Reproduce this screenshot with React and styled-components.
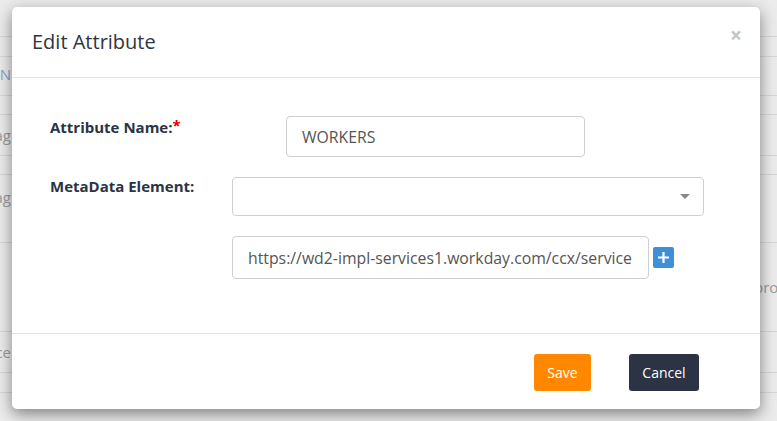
import React from 'react';
import styled, { createGlobalStyle } from 'styled-components';

const GlobalStyle = createGlobalStyle`
  html, body {
    margin: 0;
    padding: 0;
    background: #ebebeb;
  }
  body {
    font-family: "Open Sans", Lato, sans-serif;
  }
`;

const Page = styled.div`
  position: relative;
  width: 777px;
  height: 421px;
  overflow: hidden;
  background: #ebebeb;
`;

const Table = styled.div`
  display: flex;
  flex-direction: column;
`;

const Row = styled.div`
  height: ${(p) => p.h}px;
  display: flex;
  align-items: ${(p) => (p.pad != null ? 'flex-start' : 'center')};
  padding-top: ${(p) => p.pad || 0}px;
  justify-content: space-between;
  border-bottom: 1px solid #d6d6d6;
  box-sizing: border-box;
  font-size: 15px;
  line-height: 20px;
  color: #9b9b9b;
`;

const EdgeCell = styled.div`
  width: 11px;
  overflow: hidden;
  white-space: nowrap;
  display: flex;
  justify-content: flex-end;
  color: ${(p) => p.color || '#9b9b9b'};
`;

const RightCell = styled.div`
  width: 23px;
  overflow: hidden;
  white-space: nowrap;
`;

const Modal = styled.div`
  position: absolute;
  left: 12px;
  top: 7px;
  width: 748px;
  height: 402px;
  background: #fff;
  border-radius: 5px;
  box-shadow: 0 5px 15px rgba(0, 0, 0, 0.45);
  display: flex;
  flex-direction: column;
  box-sizing: border-box;
`;

const Header = styled.div`
  height: 71px;
  flex-shrink: 0;
  border-bottom: 1px solid #e5e5e5;
  box-sizing: border-box;
  display: flex;
  align-items: center;
  justify-content: space-between;
  padding: 0 20px;
`;

const Title = styled.h4`
  margin: 0;
  font-size: 20px;
  font-weight: 400;
  color: #2f3542;
  padding-bottom: 1px;
`;

const Close = styled.span`
  font-size: 21px;
  font-weight: 700;
  color: #c4c4c4;
  line-height: 1;
  margin-bottom: 14px;
  margin-right: -2px;
`;

const Body = styled.div`
  flex: 1;
  padding: 38px 0 0 38px;
  display: grid;
  grid-template-columns: 182px auto;
  grid-auto-rows: min-content;
  row-gap: 20px;
  align-content: start;
`;

const Label = styled.label`
  font-size: 15px;
  font-weight: 700;
  color: #2b3344;
  line-height: 20px;
  margin-top: -1px;
`;

const Required = styled.span`
  color: #e00000;
  vertical-align: 2px;
`;

const FieldRow = styled.div`
  display: flex;
  align-items: center;
  gap: 4px;
  margin-left: ${(p) => p.offset || 0}px;
`;

const Input = styled.div`
  width: ${(p) => p.w}px;
  height: ${(p) => p.h}px;
  box-sizing: border-box;
  border: 1px solid #cfcfcf;
  border-radius: 4px;
  display: flex;
  align-items: center;
  padding: 0 15px;
  font-size: 15.8px;
  color: #555;
  white-space: nowrap;
  overflow: hidden;
`;

const Select = styled(Input)`
  justify-content: flex-end;
  padding-right: 13px;
`;

const Caret = styled.span`
  width: 0;
  height: 0;
  border-left: 5px solid transparent;
  border-right: 5px solid transparent;
  border-top: 5px solid #888;
`;

const AddButton = styled.span`
  width: 21px;
  height: 21px;
  border-radius: 2px;
  background: #3d8fd6;
  display: flex;
  align-items: center;
  justify-content: center;
  margin-top: -1px;
`;

const Footer = styled.div`
  height: 76px;
  flex-shrink: 0;
  border-top: 1px solid #e5e5e5;
  box-sizing: border-box;
  display: flex;
  align-items: flex-start;
  justify-content: flex-end;
  padding: 20px 61px 0 0;
  gap: 38px;
`;

const Button = styled.button`
  height: 37px;
  width: ${(p) => p.w}px;
  padding: 0;
  border: none;
  border-radius: 3px;
  font-family: inherit;
  font-size: 14px;
  color: #fff;
  background: ${(p) => p.bg};
`;

// rows of the list behind the dialog
const rows = [
  { h: 37 },
  { h: 20 },
  { h: 39, pad: 7, left: 'IN', leftColor: '#7fa6cc' },
  { h: 19 },
  { h: 41, left: 'ag' },
  { h: 19 },
  { h: 68, pad: 12, left: 'ag' },
  { h: 89, right: 'pro' },
  { h: 41, left: 'ce' },
  { h: 20 },
  { h: 30 },
];

const App = () => {
  return (
    <Page>
      <GlobalStyle />
      <Table>
        {rows.map((r, i) => (
          <Row key={i} h={r.h} pad={r.pad}>
            <EdgeCell color={r.leftColor}>{r.left}</EdgeCell>
            <RightCell>{r.right}</RightCell>
          </Row>
        ))}
      </Table>

      <Modal>
        <Header>
          <Title>Edit Attribute</Title>
          <Close>×</Close>
        </Header>
        <Body>
          <Label>
            Attribute Name:<Required>*</Required>
          </Label>
          <FieldRow offset={54}>
            <Input w={299} h={41}>WORKERS</Input>
          </FieldRow>

          <Label>MetaData Element:</Label>
          <FieldRow>
            <Select w={472} h={39}>
              <Caret />
            </Select>
          </FieldRow>

          <span />
          <FieldRow>
            <Input w={417} h={43}>https://wd2-impl-services1.workday.com/ccx/service</Input>
            <AddButton>
              <svg width="13" height="13" viewBox="0 0 13 13">
                <path d="M6.5 1v11M1 6.5h11" stroke="#fff" strokeWidth="2.2" />
              </svg>
            </AddButton>
          </FieldRow>
        </Body>
        <Footer>
          <Button bg="#ff8800" w={57}>Save</Button>
          <Button bg="#2b3344" w={70}>Cancel</Button>
        </Footer>
      </Modal>
    </Page>
  );
};

export default App;
